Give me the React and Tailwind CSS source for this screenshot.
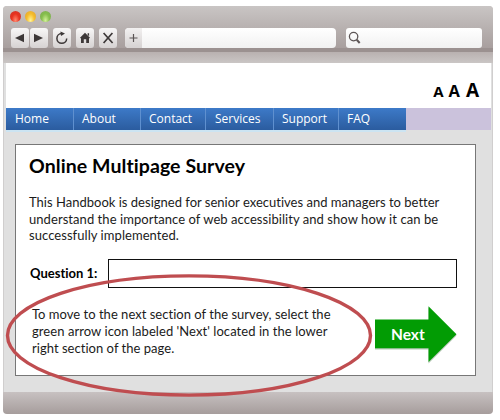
import React from 'react';

const tool =
  'flex h-5 w-[18px] items-center justify-center rounded-[3px] bg-linear-to-b from-[#f8f7f7] to-[#d6d2d2] text-[#3d3838]';

function Toolbar() {
  return (
    <header className="h-[57px] rounded-t-[4px] bg-[#c8c3c3]">
      <div className="h-[46px] rounded-t-[4px] border-b-4 border-[#9b9190] bg-linear-to-b from-[#c9c5c4] to-[#a89f9e] pt-[5px]">
        <div className="ml-[7px] flex gap-[4px]">
          <i className="size-[11px] rounded-full bg-radial-[at_50%_85%] from-[#ff8a70] via-[#e8321f] to-[#c93a30]" />
          <i className="size-[11px] rounded-full bg-radial-[at_50%_85%] from-[#fff59a] via-[#f6bd2b] to-[#d9a03a]" />
          <i className="size-[11px] rounded-full bg-radial-[at_50%_85%] from-[#d3f09a] via-[#86bf4c] to-[#7ba753]" />
        </div>
        <div className="mt-[6px] ml-[8px] flex h-5">
          <span className={tool}>
            <svg width="18" height="20" fill="currentColor"><path d="M4 10 13 5.7v8.6z" /></svg>
          </span>
          <span className={`${tool} ml-px`}>
            <svg width="18" height="20" fill="currentColor"><path d="M13 10 4 5.7v8.6z" /></svg>
          </span>
          <span className={`${tool} ml-[5px]`}>
            <svg width="18" height="20" fill="none" stroke="currentColor" strokeWidth="1.5">
              <path d="M8.7 5.5A4.9 4.9 0 1 0 13.7 10.5" />
              <path d="M7.4 3.4 12 5.6 8 8z" fill="currentColor" stroke="none" />
            </svg>
          </span>
          <span className={`${tool} ml-[5px]`}>
            <svg width="18" height="20" fill="currentColor">
              <path d="M9 4.7 14 9.7 13 10.5V15h-2.8v-3.7H7.8V15H5v-4.5L4 9.7zM11.6 5.2h1.5v3l-1.5-1.5z" />
            </svg>
          </span>
          <span className={`${tool} ml-[5px]`}>
            <svg width="18" height="20" fill="none" stroke="currentColor" strokeWidth="1.7">
              <path d="M4.6 5 13.6 15M13.4 5 4.6 15" />
            </svg>
          </span>
          <div className="ml-[8px] flex w-[211px] overflow-hidden rounded-[4px] bg-linear-to-b from-white to-[#f1f1f1]">
            <span className="flex w-[17px] items-center justify-center bg-linear-to-b from-[#f2f0f0] to-[#d6d2d2]">
              <svg width="17" height="20" stroke="#5a5454" strokeWidth="1.2"><path d="M4.5 10h8M8.5 6v8" /></svg>
            </span>
          </div>
          <div className="ml-[10px] w-[136px] rounded-[3px] bg-linear-to-b from-white to-[#f1f1f1]">
            <svg width="18" height="20" fill="none" stroke="#5d5656">
              <circle cx="7.6" cy="8.6" r="4.2" strokeWidth="1.3" />
              <path d="m10.7 11.8 3 3.2" strokeWidth="2" />
            </svg>
          </div>
        </div>
      </div>
      <div className="h-[11px] bg-linear-to-b from-[#b9b1b0] to-[#cac6c5]" />
    </header>
  );
}

function Nav() {
  const item = "border-r border-[#5f90cf] font-['Open_Sans',sans-serif] text-[12px] leading-[22px] text-white whitespace-nowrap";
  return (
    <nav className="flex h-[22px] bg-[#cbc2dc]">
      <div className="flex w-[400px] bg-linear-to-b from-[#3d7ac8] to-[#2b5c9f]">
        <span className={`${item} w-[68px] pl-[9px]`}>Home</span>
        <span className={`${item} w-[67px] pl-[8px]`}>About</span>
        <span className={`${item} w-[65px] pl-[8px]`}>Contact</span>
        <span className={`${item} w-[68px] pl-[9px]`}>Services</span>
        <span className={`${item} w-[65px] pl-[8px]`}>Support</span>
        <span className="pl-[8px] font-['Open_Sans',sans-serif] text-[12px] leading-[22px] text-white">FAQ</span>
      </div>
    </nav>
  );
}

export default function App() {
  return (
    <div className="h-[420px] w-[500px] overflow-hidden bg-white pt-[6px] pl-[3px] font-['Lato',sans-serif] [font-variant-ligatures:none]">
      <div className="relative w-[490px]">
        <Toolbar />
        <main className="h-[329px] border-x border-[#d0cece] bg-[#e0e0e0] px-[2px] pr-px">
          <div className="flex h-[45px] items-baseline justify-end bg-white pt-[13px] pr-[12px] font-['Open_Sans',sans-serif] font-bold text-black">
            <span className="text-[15px]">A</span>
            <span className="ml-[5px] text-[16.5px]">A</span>
            <span className="ml-[6px] text-[19px]">A</span>
          </div>
          <Nav />
          <div className="h-[2px] w-[400px] bg-[#cce4f2]" />
          <section className="mt-[12px] ml-[9px] h-[232px] w-[461px] border border-[#777] bg-white pl-[13px] whitespace-nowrap text-[#1b1b1b]">
            <h1 className="mt-[8px] text-[19.5px] leading-[26px] font-bold tracking-[0.08px] text-black">Online Multipage Survey</h1>
            <div className="mt-[15px] text-[13px] leading-[16.7px]">
              <p className="tracking-[0.01px]">This Handbook is designed for senior executives and managers to better</p>
              <p className="tracking-[0.06px]">understand the importance of web accessibility and show how it can be</p>
              <p className="tracking-[0.06px]">successfully implemented.</p>
            </div>
            <div className="mt-[15px] flex h-[29px] items-center">
              <b className="w-[79px] pl-px text-[13px] text-black">Question 1:</b>
              <div className="h-[29px] w-[349px] border border-[#111] bg-white" />
            </div>
            <div className="flex">
              <div className="mt-[18px] w-[346px] pl-[3px] text-[13px] leading-[16.9px]">
                <p className="tracking-[0.02px]">To move to the next section of the survey, select the</p>
                <p className="tracking-[0.06px]">green arrow icon labeled 'Next' located in the lower</p>
                <p className="tracking-[0.03px]">right section of the page.</p>
              </div>
              <div className="relative mt-[18px] h-[58px] w-[83px]">
                <svg className="absolute inset-0" width="83" height="58">
                  <path d="M0 14.5h53.5V1.5l28 28-28 28v-14H0z" fill="#8aa38a" opacity=".6" />
                  <path d="M0 13.5h53.5V.3l28 28-28 27.7V42.2H0z" fill="#029c04" />
                </svg>
                <b className="relative block pt-[18px] pl-[16px] text-[15.5px] leading-[20px] text-white">Next</b>
              </div>
            </div>
          </section>
        </main>
        <footer className="h-[22px] rounded-b-[4px] bg-linear-to-b from-[#c7c1c1] to-[#a69d9c]" />
        <svg className="absolute top-[266px] left-[1px]" width="372" height="128" fill="none">
          <ellipse cx="185" cy="63.5" rx="181.5" ry="59.6" stroke="#bf4d50" strokeWidth="3.4" />
        </svg>
      </div>
    </div>
  );
}
